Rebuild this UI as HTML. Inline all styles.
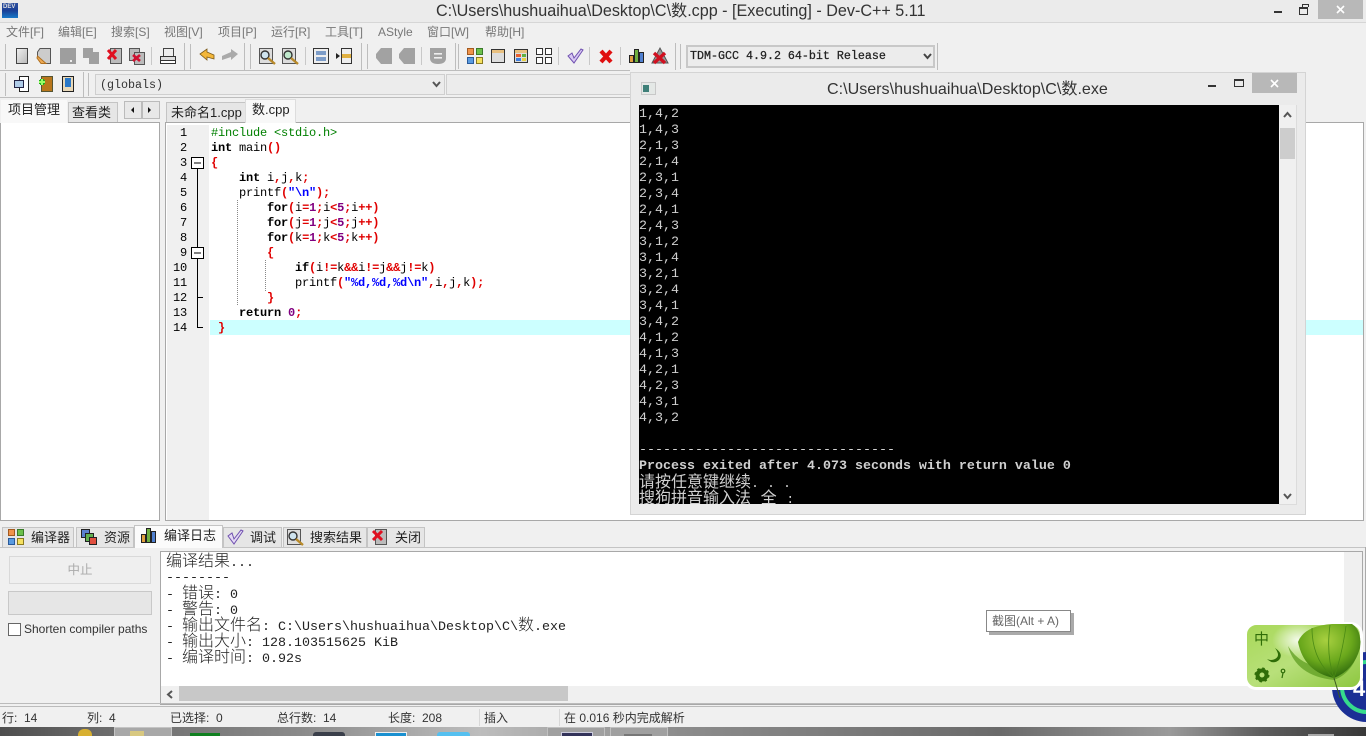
<!DOCTYPE html>
<html lang="zh"><head><meta charset="utf-8"><title>Dev-C++ 5.11</title>
<style>
html,body{margin:0;padding:0}
body{width:1366px;height:736px;overflow:hidden;position:relative;background:#f0f0f0;font-family:"Liberation Sans","Noto Sans CJK SC",sans-serif;font-size:12px;color:#222}
.a{position:absolute;box-sizing:border-box}
.t{position:absolute;white-space:pre;line-height:16px}
.m{color:#777;top:24px;font-size:12px}
.mono{font-family:"Liberation Mono","Noto Sans CJK SC",monospace}
.tab{position:absolute;box-sizing:border-box;background:#e6e6e6;border:1px solid #c4c4c4;border-bottom:0;font-size:13px;line-height:19px;white-space:pre;color:#222}
.on{background:#f8f8f8}
#code{position:absolute;left:211px;top:126px;font:12px/15px "Liberation Mono",monospace;letter-spacing:-.2px;white-space:pre;color:#000}
#code div{height:15px}
b{font-weight:bold}
.r{color:#e00000;font-weight:bold}.k{font-weight:bold}.n{color:#800080;font-weight:bold}.s{color:#0000ff;font-weight:bold}.g{color:#008000}
#nums{position:absolute;left:167px;top:126px;width:20px;text-align:right;font:12px/15px "Liberation Mono",monospace;letter-spacing:-.2px;color:#000}
#con{position:absolute;left:639px;top:105px;width:640px;height:399px;padding-top:2px;box-sizing:border-box;background:#000;color:#d0d0d0;overflow:hidden;font:13.33px/16px "Liberation Mono","Noto Sans CJK SC",monospace;white-space:pre}
#con div{height:16px}
#con .c{font-size:16px;font-weight:300;font-family:"Liberation Mono","WenQuanYi Zen Hei",monospace}
#log{position:absolute;left:166px;top:554px;font:13.33px/16px "Liberation Mono","Noto Sans CJK SC",monospace;white-space:pre;color:#222}
#log div{height:16px}
#log span{font-size:16px;font-weight:300}
.st{position:absolute;top:710px;line-height:16px;font-size:12px;color:#333;white-space:pre}
</style></head><body>

<!-- title bar -->
<div class="a" style="left:0;top:0;width:1366px;height:23px;background:#ebebeb;border-bottom:1px solid #d6d6d6"></div>
<div class="a" style="left:2px;top:3px;width:16px;height:15px;background:linear-gradient(#2d4f9e 0,#1a3f96 50%,#1778c8 100%)"></div>
<div class="t" style="left:3px;top:4px;font:bold 6px/7px 'Liberation Sans';color:#ddd">DEV</div>
<div class="t" style="left:436px;top:3px;font-size:16.15px;color:#333">C:\Users\hushuaihua\Desktop\C\数.cpp - [Executing] - Dev-C++ 5.11</div>
<div class="a" style="left:1274px;top:11px;width:8px;height:2px;background:#333"></div>
<div class="a" style="left:1299px;top:7px;width:9px;height:8px;border:1px solid #333;border-top-width:2px"></div>
<div class="a" style="left:1302px;top:4px;width:7px;height:3px;border:1px solid #333;border-bottom:0;border-left:1px solid #333"></div>
<div class="a" style="left:1318px;top:0;width:45px;height:19px;background:#b8b8b8"></div>
<svg class="a" style="left:1336px;top:5px" width="9" height="9"><path d="M1 1L8 8M8 1L1 8" stroke="#fff" stroke-width="1.6"/></svg>

<!-- menu -->
<div class="t m" style="left:6px">文件[F]</div>
<div class="t m" style="left:58px">编辑[E]</div>
<div class="t m" style="left:111px">搜索[S]</div>
<div class="t m" style="left:164px">视图[V]</div>
<div class="t m" style="left:218px">项目[P]</div>
<div class="t m" style="left:271px">运行[R]</div>
<div class="t m" style="left:325px">工具[T]</div>
<div class="t m" style="left:378px">AStyle</div>
<div class="t m" style="left:427px">窗口[W]</div>
<div class="t m" style="left:485px">帮助[H]</div>

<!-- toolbar lines and icons -->
<svg class="a" style="left:0;top:40px" width="1000" height="62" viewBox="0 40 1000 62">
 <defs><linearGradient id="pg" x1="0" y1="0" x2="1" y2="1"><stop offset="0" stop-color="#f0f0f0"/><stop offset="1" stop-color="#b8b8b8"/></linearGradient></defs>
 <g fill="none" stroke="#bdbdbd">
  <path d="M0 70.5H630M0 97.5H630M5.5 44V69M184.5 43V70M190.5 44V69M244.5 43V70M250.5 44V69M361.5 43V70M367.5 44V69M455.5 43V70M458.5 44V69M675.5 43V70M680.5 44V69M937.5 43V70M5.5 73V96M83.5 72V97M88.5 73V96"/>
  <path d="M151.5 47V65M305.5 47V65M421.5 47V65M558.5 47V65M589.5 47V65M620.5 47V65" stroke="#c8c8c8"/>
 </g>
 <!-- new -->
 <rect x="16.5" y="48.5" width="11" height="15" fill="url(#pg)" stroke="#444"/>
 <!-- open -->
 <path d="M40 48.5H50.5V63.5H42L37.5 57V52Z" fill="#ccc" stroke="#555"/><path d="M37.5 56L46 63.5H41L37 58Z" fill="#eeaa55" stroke="#b07020"/>
 <!-- save gray -->
 <rect x="60" y="48" width="16" height="16" fill="#9e9e9e"/><rect x="70" y="60" width="2" height="2" fill="#eee"/>
 <path d="M83 48H93V52H99V64H89V58H83Z" fill="#a0a0a0"/>
 <!-- close -->
 <rect x="110.5" y="48.5" width="11" height="15" fill="#bbb" stroke="#555"/><path d="M108 50L116 59M116 50L108 59" stroke="#e01020" stroke-width="3"/>
 <rect x="129.5" y="48.5" width="10" height="12" fill="#bbb" stroke="#555"/><rect x="134.5" y="52.5" width="10" height="12" fill="#bbb" stroke="#555"/><path d="M133 55L140 61M140 55L133 61" stroke="#d01030" stroke-width="2.6"/>
 <!-- print -->
 <rect x="163.5" y="48.5" width="10" height="8" fill="#eee" stroke="#444"/><rect x="160.5" y="56.5" width="15" height="4" fill="#ddd" stroke="#333"/><rect x="160.5" y="60.5" width="15" height="3" fill="#fff" stroke="#333"/>
 <!-- undo/redo -->
 <path d="M200 54L207 49V52L214 55V59L207 57V60Z" fill="#f3b73a" stroke="#7c5a1a" stroke-width=".8"/>
 <path d="M238 54L231 49V52L222 56V60L231 57V60Z" fill="#aaa"/>
 <!-- find -->
 <rect x="259.5" y="48.5" width="13" height="15" fill="#ddd" stroke="#555"/><circle cx="265" cy="55" r="4" fill="#cfe3ee" stroke="#333" stroke-width="1.4"/><path d="M268 58L275 64" stroke="#b88a2a" stroke-width="2.4"/>
 <rect x="282.5" y="48.5" width="13" height="15" fill="#ddd" stroke="#555"/><circle cx="288" cy="55" r="4" fill="#bfe8cc" stroke="#333" stroke-width="1.4"/><path d="M291 58L298 64" stroke="#b88a2a" stroke-width="2.4"/>
 <!-- boxes -->
 <rect x="313.5" y="48.5" width="15" height="15" fill="#eee" stroke="#333"/><rect x="316" y="51" width="10" height="4" fill="#7c9cc8"/><rect x="316" y="57" width="10" height="4" fill="#7c9cc8"/>
 <path d="M341.5 48.5H351.5V63.5H341.5Z" fill="#eee" stroke="#333"/><rect x="342" y="54" width="9" height="4" fill="#e0b040"/><path d="M336 53L340 56L336 59Z" fill="#222"/>
 <!-- gray -->
 <path d="M381 48H392V64H381L376 58V54Z" fill="#a2a2a2"/><path d="M404 48H415V64H404L399 58V54Z" fill="#a2a2a2"/>
 <path d="M430 48H446V58Q446 64 438 64Q430 64 430 58Z" fill="#a2a2a2"/><rect x="434" y="53" width="8" height="1.6" fill="#eee"/><rect x="434" y="57" width="8" height="1.6" fill="#eee"/>
 <!-- colour grids -->
 <rect x="467.5" y="48.5" width="6" height="6" fill="#f0934a" stroke="#a35a20"/><rect x="476.5" y="48.5" width="6" height="6" fill="#6cc04a" stroke="#3a7a2a"/><rect x="467.5" y="57.5" width="6" height="6" fill="#5a9be0" stroke="#2a5a9a"/><rect x="476.5" y="57.5" width="6" height="6" fill="#f5e060" stroke="#8a7a20"/>
 <rect x="491.5" y="49.5" width="13" height="13" fill="#ddd" stroke="#333"/><rect x="492" y="50" width="12" height="3" fill="#e8c080"/>
 <rect x="514.5" y="49.5" width="13" height="13" fill="#ddd" stroke="#333"/><rect x="515" y="50" width="12" height="3" fill="#e8c080"/><rect x="516" y="54" width="5" height="3" fill="#e86030"/><rect x="522" y="54" width="4" height="3" fill="#60b040"/><rect x="516" y="58" width="5" height="3" fill="#4080e0"/><rect x="522" y="58" width="4" height="3" fill="#e8d040"/>
 <rect x="536.5" y="48.5" width="6" height="6" fill="#fff" stroke="#333"/><rect x="545.5" y="48.5" width="6" height="6" fill="#fff" stroke="#333"/><rect x="536.5" y="57.5" width="6" height="6" fill="#fff" stroke="#333"/><rect x="545.5" y="57.5" width="6" height="6" fill="#fff" stroke="#333"/>
 <!-- check -->
 <path d="M568 56L572 53L574 58L581 49L583 50L574 63Z" fill="#d8c8f4" stroke="#7050b0"/>
 <!-- x -->
 <path d="M601 51L611 62M611 51L601 62" stroke="#e01010" stroke-width="4.2"/>
 <!-- chart -->
 <rect x="629.5" y="55.5" width="4" height="7" fill="#e0a040" stroke="#222"/><rect x="634.5" y="49.5" width="4" height="13" fill="#70b040" stroke="#222"/><rect x="639.5" y="52.5" width="4" height="10" fill="#5080d0" stroke="#222"/>
 <path d="M652 63L660 48L668 63Z" fill="#999" stroke="#555"/><path d="M654 53L665 63M665 53L654 63" stroke="#d01020" stroke-width="3.4"/>
 <!-- toolbar 2 -->
 <rect x="19.5" y="76.5" width="9" height="15" fill="#fff" stroke="#222"/><rect x="14.5" y="80.5" width="9" height="7" fill="#b0cce8" stroke="#224"/>
 <rect x="41.5" y="76.5" width="11" height="15" fill="#b8761c" stroke="#553"/><path d="M42 80V84M40 82H44" stroke="#2a2" stroke-width="6"/><path d="M42 79V85M39 82H45" stroke="#9f6" stroke-width="2"/>
 <rect x="62.5" y="76.5" width="11" height="15" fill="#e8d8b8" stroke="#222"/><rect x="65" y="78" width="6" height="9" fill="#2a78c8"/>
</svg>

<!-- compiler combo -->
<div class="a" style="left:686px;top:45px;width:249px;height:23px;background:#ececec;border:2px solid #c8c8c8"></div>
<div class="t mono" style="left:690px;top:48px;font-size:11.67px;color:#222;-webkit-text-stroke:.25px #222">TDM-GCC 4.9.2 64-bit Release</div>
<svg class="a" style="left:923px;top:53px" width="9" height="7"><path d="M1 1L4.500 5L8 1" fill="none" stroke="#444" stroke-width="2"/></svg>

<!-- globals combo -->
<div class="a" style="left:95px;top:74px;width:350px;height:21px;background:#ececec;border:1px solid #cfcfcf"></div>
<div class="a" style="left:446px;top:74px;width:190px;height:21px;background:#ececec;border:1px solid #cfcfcf"></div>
<div class="t mono" style="left:100px;top:77px;font-size:11.67px;color:#333">(globals)</div>
<svg class="a" style="left:432px;top:81px" width="9" height="7"><path d="M1 1L4.500 5L8 1" fill="none" stroke="#555" stroke-width="2"/></svg>

<!-- left pane -->
<div class="a" style="left:0;top:122px;width:160px;height:399px;background:#fff;border:1px solid #a8a8a8"></div>
<div class="tab on" style="left:0;top:99px;width:68px;height:24px;border-color:#f0f0f0;padding-left:7px;background:#f8f8f8">项目管理</div>
<div class="tab" style="left:68px;top:102px;width:50px;height:20px;padding-left:3px;line-height:20px">查看类</div>
<div class="a" style="left:124px;top:101px;width:18px;height:18px;background:#e8e8e8;border:1px solid #bbb"></div>
<div class="a" style="left:142px;top:101px;width:18px;height:18px;background:#e8e8e8;border:1px solid #bbb"></div>
<svg class="a" style="left:130px;top:106px" width="26" height="8"><path d="M4 1V7L1 4ZM18 1V7L21 4Z" fill="#111"/></svg>

<!-- editor -->
<div class="a" style="left:165px;top:122px;width:1199px;height:399px;background:#fff;border:1px solid #a8a8a8"></div>
<div class="a" style="left:167px;top:125px;width:42px;height:395px;background:#f0f0f0"></div>
<div class="tab" style="left:166px;top:102px;width:80px;height:20px;padding-left:4px;line-height:20px">未命名1.cpp</div>
<div class="tab on" style="left:245px;top:99px;width:51px;height:24px;padding-left:6px;border-color:#ddd;line-height:20px">数.cpp</div>
<div class="a" style="left:210px;top:320px;width:1153px;height:15px;background:#ccffff"></div>

<div id="nums"><div>1</div><div>2</div><div>3</div><div>4</div><div>5</div><div>6</div><div>7</div><div>8</div><div>9</div><div>10</div><div>11</div><div>12</div><div>13</div><div>14</div></div>
<svg class="a" style="left:185px;top:150px" width="90" height="185" viewBox="185 150 90 185">
 <path d="M197.500 168V247M197.500 258V327.500H203M197.500 297.500H203" fill="none" stroke="#000"/>
 <rect x="191.500" y="157.500" width="12" height="11" fill="#fff" stroke="#000"/><path d="M194 163H201" stroke="#000"/>
 <rect x="191.500" y="247.500" width="12" height="11" fill="#fff" stroke="#000"/><path d="M194 253H201" stroke="#000"/>
 <path d="M237.500 200V306M265.500 260V291" stroke="#888" stroke-dasharray="1 1"/>
</svg>
<div id="code"><div><span class="g">#include &lt;stdio.h&gt;</span></div><div><span class="k">int</span> main<span class="r">()</span></div><div><span class="r">{</span></div><div>    <span class="k">int</span> i<span class="r">,</span>j<span class="r">,</span>k<span class="r">;</span></div><div>    printf<span class="r">(</span><span class="s">"\n"</span><span class="r">);</span></div><div>        <span class="k">for</span><span class="r">(</span>i<span class="r">=</span><span class="n">1</span><span class="r">;</span>i<span class="r">&lt;</span><span class="n">5</span><span class="r">;</span>i<span class="r">++)</span></div><div>        <span class="k">for</span><span class="r">(</span>j<span class="r">=</span><span class="n">1</span><span class="r">;</span>j<span class="r">&lt;</span><span class="n">5</span><span class="r">;</span>j<span class="r">++)</span></div><div>        <span class="k">for</span><span class="r">(</span>k<span class="r">=</span><span class="n">1</span><span class="r">;</span>k<span class="r">&lt;</span><span class="n">5</span><span class="r">;</span>k<span class="r">++)</span></div><div>        <span class="r">{</span></div><div>            <span class="k">if</span><span class="r">(</span>i<span class="r">!=</span>k<span class="r">&amp;&amp;</span>i<span class="r">!=</span>j<span class="r">&amp;&amp;</span>j<span class="r">!=</span>k<span class="r">)</span></div><div>            printf<span class="r">(</span><span class="s">"%d,%d,%d\n"</span><span class="r">,</span>i<span class="r">,</span>j<span class="r">,</span>k<span class="r">);</span></div><div>        <span class="r">}</span></div><div>    <span class="k">return</span> <span class="n">0</span><span class="r">;</span></div><div> <span class="r">}</span></div></div>

<!-- console window -->
<div class="a" style="left:630px;top:72px;width:676px;height:443px;background:#ebebeb;border:1px solid #d4d4d4"></div>
<div class="a" style="left:641px;top:82px;width:15px;height:13px;background:#e4e8e6;border:1px solid #c8c8c8"></div>
<div class="a" style="left:643px;top:85px;width:6px;height:7px;background:#3e7f78"></div>
<div class="t" style="left:827px;top:81px;font-size:16.1px;color:#333">C:\Users\hushuaihua\Desktop\C\数.exe</div>
<div class="a" style="left:1208px;top:85px;width:8px;height:2px;background:#333"></div>
<div class="a" style="left:1234px;top:79px;width:10px;height:8px;border:1px solid #333;border-top-width:2px"></div>
<div class="a" style="left:1252px;top:73px;width:45px;height:20px;background:#b8b8b8"></div>
<svg class="a" style="left:1270px;top:79px" width="9" height="9"><path d="M1 1L8 8M8 1L1 8" stroke="#fff" stroke-width="1.6"/></svg>
<div class="a" style="left:1279px;top:105px;width:18px;height:400px;background:#f0f0f0;border-right:1px solid #dcdcdc;border-bottom:1px solid #dcdcdc"></div>
<div class="a" style="left:1280px;top:128px;width:15px;height:31px;background:#cdcdcd"></div>
<svg class="a" style="left:1283px;top:111px" width="9" height="7"><path d="M1 6L4.500 2L8 6" fill="none" stroke="#555" stroke-width="2"/></svg>
<svg class="a" style="left:1283px;top:493px" width="9" height="7"><path d="M1 1L4.500 5L8 1" fill="none" stroke="#555" stroke-width="2"/></svg>
<div id="con"><div>1,4,2</div><div>1,4,3</div><div>2,1,3</div><div>2,1,4</div><div>2,3,1</div><div>2,3,4</div><div>2,4,1</div><div>2,4,3</div><div>3,1,2</div><div>3,1,4</div><div>3,2,1</div><div>3,2,4</div><div>3,4,1</div><div>3,4,2</div><div>4,1,2</div><div>4,1,3</div><div>4,2,1</div><div>4,2,3</div><div>4,3,1</div><div>4,3,2</div><div> </div><div>--------------------------------</div><div><b>Process exited after 4.073 seconds with return value 0</b></div><div><span class="c">请按任意键继续</span>. . .</div><div><span class="c">搜狗拼音输入法 全 </span>:</div></div>

<!-- bottom tabs -->
<div class="tab" style="left:2px;top:527px;width:72px;height:20px;padding-left:28px;line-height:20px">编译器</div>
<div class="tab" style="left:76px;top:527px;width:58px;height:20px;padding-left:27px;line-height:20px">资源</div>
<div class="tab" style="left:223px;top:527px;width:59px;height:20px;padding-left:26px;line-height:20px">调试</div>
<div class="tab" style="left:283px;top:527px;width:84px;height:20px;padding-left:26px;line-height:20px">搜索结果</div>
<div class="tab" style="left:367px;top:527px;width:58px;height:20px;padding-left:27px;line-height:20px">关闭</div>
<div class="a" style="left:0;top:547px;width:1366px;height:1px;background:#c4c4c4"></div>
<div class="a" style="left:1365px;top:547px;width:1px;height:160px;background:#aaa"></div>
<div class="tab" style="left:134px;top:525px;width:89px;height:23px;padding-left:29px;background:#fbfbfb;line-height:19px">编译日志</div>
<svg class="a" style="left:0;top:524px" width="430" height="24" viewBox="0 524 430 24">
 <rect x="8.500" y="529.500" width="6" height="6" fill="#f0934a" stroke="#a35a20"/><rect x="17.500" y="529.500" width="6" height="6" fill="#6cc04a" stroke="#3a7a2a"/><rect x="8.500" y="538.500" width="6" height="6" fill="#5a9be0" stroke="#2a5a9a"/><rect x="17.500" y="538.500" width="6" height="6" fill="#f5e060" stroke="#8a7a20"/>
 <rect x="81.500" y="529.500" width="8" height="8" fill="#5a80d0" stroke="#222"/><rect x="85.500" y="533.500" width="8" height="8" fill="#60b050" stroke="#222"/><rect x="89.500" y="537.500" width="7" height="7" fill="#e05040" stroke="#222"/>
 <rect x="141.500" y="534.500" width="4" height="8" fill="#e0a040" stroke="#222"/><rect x="146.500" y="528.500" width="4" height="14" fill="#70b040" stroke="#222"/><rect x="151.500" y="531.500" width="4" height="11" fill="#5080d0" stroke="#222"/>
 <path d="M228 536L232 533L234 539L241 530L243 531L234 544Z" fill="#e4daf4" stroke="#7050b0"/>
 <rect x="287.500" y="529.500" width="13" height="15" fill="#ddd" stroke="#555"/><circle cx="293" cy="536" r="4" fill="#cfe3ee" stroke="#333" stroke-width="1.400"/><path d="M296 539L303 545" stroke="#b88a2a" stroke-width="2.400"/>
 <rect x="375.500" y="529.500" width="11" height="15" fill="#bbb" stroke="#555"/><path d="M373 531L382 540M382 531L373 540" stroke="#e01020" stroke-width="3"/>
</svg>

<!-- bottom left controls -->
<div class="a" style="left:9px;top:556px;width:142px;height:28px;background:#efefef;border:1px solid #d9d9d9;text-align:center;line-height:26px;color:#aaa;font-size:12.500px">中止</div>
<div class="a" style="left:8px;top:591px;width:144px;height:24px;background:#e6e6e6;border:1px solid #c8c8c8"></div>
<div class="a" style="left:8px;top:623px;width:13px;height:13px;background:#fff;border:1px solid #666"></div>
<div class="t" style="left:24px;top:621px;font-size:12px;color:#333">Shorten compiler paths</div>

<!-- log -->
<div class="a" style="left:160px;top:551px;width:1203px;height:154px;background:#fff;border:1px solid #a8a8a8"></div>
<div class="a" style="left:1344px;top:552px;width:18px;height:152px;background:#f0f0f0"></div>
<div class="a" style="left:161px;top:686px;width:1183px;height:18px;background:#f0f0f0"></div>
<div class="a" style="left:179px;top:686px;width:389px;height:15px;background:#c8c8c8"></div>
<svg class="a" style="left:166px;top:690px" width="8" height="9"><path d="M6 1L2 4.500L6 8" fill="none" stroke="#555" stroke-width="2"/></svg>
<div id="log"><div><span>编译结果</span>...</div><div style="margin-top:1px">--------</div><div style="margin-top:-1px">- <span>错误</span>: 0</div><div>- <span>警告</span>: 0</div><div>- <span>输出文件名</span>: C:\Users\hushuaihua\Desktop\C\<span>数</span>.exe</div><div>- <span>输出大小</span>: 128.103515625 KiB</div><div>- <span>编译时间</span>: 0.92s</div></div>

<!-- tooltip -->
<div class="a" style="left:986px;top:610px;width:85px;height:22px;background:#fff;border:1px solid #888;box-shadow:3px 3px 0 #aaa;padding-left:5px;line-height:20px;color:#666;font-size:12px;white-space:pre">截图(Alt + A)</div>

<!-- status bar -->
<div class="a" style="left:0;top:703px;width:1366px;height:1px;background:#bbb"></div>
<div class="a" style="left:0;top:706px;width:1366px;height:1px;background:#bbb"></div>
<div class="a" style="left:0;top:707px;width:1366px;height:20px;background:#f0f0f0"></div>
<div class="st" style="left:2px">行:  14</div>
<div class="st" style="left:87px">列:  4</div>
<div class="st" style="left:170px">已选择:  0</div>
<div class="st" style="left:277px">总行数:  14</div>
<div class="st" style="left:388px">长度:  208</div>
<div class="st" style="left:484px">插入</div>
<div class="st" style="left:564px">在 0.016 秒内完成解析</div>
<div class="a" style="left:479px;top:709px;width:1px;height:17px;background:#d8d8d8"></div>
<div class="a" style="left:559px;top:709px;width:1px;height:17px;background:#d8d8d8"></div>

<!-- taskbar -->
<div class="a" style="left:0;top:727px;width:1366px;height:9px;background:linear-gradient(90deg,#4e4e4e 0,#6a6a6a 100px,#8a8a8a 300px,#bdbdbd 480px,#8c8c8c 680px,#7a7a7a 850px,#6a6a6a 1000px,#9a9a9a 1170px,#5e5e5e 1260px,#383838 1366px)"></div>
<div class="a" style="left:114px;top:727px;width:58px;height:9px;background:#a8a8a8;border:1px solid #c4c4c4;border-bottom:0"></div>
<div class="a" style="left:130px;top:731px;width:14px;height:5px;background:#d8c880"></div>
<div class="a" style="left:78px;top:729px;width:14px;height:7px;background:#d8b030;border-radius:6px 6px 0 0"></div>
<div class="a" style="left:190px;top:733px;width:30px;height:3px;background:#108020"></div>
<div class="a" style="left:313px;top:732px;width:32px;height:4px;background:#3a3f4a;border-radius:3px 3px 0 0"></div>
<div class="a" style="left:375px;top:732px;width:32px;height:4px;background:#1a90d0;border:1px solid #eee;border-bottom:0"></div>
<div class="a" style="left:437px;top:732px;width:33px;height:4px;background:#55c0f0;border-radius:3px 3px 0 0"></div>
<div class="a" style="left:547px;top:727px;width:58px;height:9px;background:#a0a0a0;border:1px solid #c0c0c0;border-bottom:0"></div>
<div class="a" style="left:561px;top:732px;width:32px;height:4px;background:#33335a;border:1px solid #ccd;border-bottom:0"></div>
<div class="a" style="left:610px;top:727px;width:58px;height:9px;background:#a0a0a0;border:1px solid #c0c0c0;border-bottom:0"></div>
<div class="a" style="left:624px;top:734px;width:28px;height:2px;background:#777"></div>
<div class="a" style="left:1308px;top:734px;width:26px;height:2px;background:#e8e8e8;opacity:.6"></div>

<!-- floating circle + IME -->
<svg class="a" style="left:1240px;top:618px" width="126" height="108" viewBox="1240 618 126 108">
 <defs>
  <linearGradient id="gb" x1="0" y1="0" x2="1" y2="1"><stop offset="0" stop-color="#a8d858"/><stop offset=".5" stop-color="#b8e07a"/><stop offset="1" stop-color="#8cc63e"/></linearGradient>
  <radialGradient id="lf" cx=".45" cy=".3" r=".75"><stop offset="0" stop-color="#a8d040"/><stop offset=".55" stop-color="#6aa81c"/><stop offset="1" stop-color="#25600a"/></radialGradient>
  <radialGradient id="gl" cx=".5" cy=".5" r=".5"><stop offset="0" stop-color="#fff" stop-opacity=".85"/><stop offset="1" stop-color="#fff" stop-opacity="0"/></radialGradient>
 </defs>
 <circle cx="1367" cy="687" r="35" fill="#1b2f95"/>
 <circle cx="1367" cy="687" r="25" fill="none" stroke="#36db8c" stroke-width="4"/>
 <rect x="1245.500" y="623.500" width="116" height="65" rx="11" fill="url(#gb)" stroke="#fff" stroke-width="3"/>
 <ellipse cx="1298" cy="640" rx="26" ry="18" fill="url(#gl)"/>
 <path d="M1288 646Q1296 676 1334 680Q1356 672 1361 640Q1350 668 1326 668Q1300 666 1288 646Z" fill="#5f9e22" opacity=".75"/>
 <path d="M1298 642Q1304 626 1332 624H1352Q1362 630 1360 648Q1354 670 1334 678Q1304 672 1298 642Z" fill="url(#lf)"/>
 <path d="M1334 678Q1312 660 1312 628M1334 678Q1326 655 1330 625M1334 678Q1342 655 1346 626" fill="none" stroke="#4a8a14" stroke-width=".8"/>
 <path d="M1334 678L1340 698" stroke="#3a5a20"/>
 <circle cx="1262" cy="675" r="4.500" fill="none" stroke="#2f6d08" stroke-width="4"/>
 <circle cx="1262" cy="675" r="6.500" fill="none" stroke="#2f6d08" stroke-width="2" stroke-dasharray="2.500 2.600"/>
 <path d="M1275 648Q1281 656 1275 659Q1271 661 1267 659Q1273 665 1279 660Q1284 654 1275 648Z" fill="#2f6d08"/>
 <circle cx="1283" cy="671" r="1.800" fill="none" stroke="#2f6d08" stroke-width="1.200"/><path d="M1283 673L1282 678" stroke="#2f6d08" stroke-width="1.200"/>
</svg>
<div class="t" style="left:1254px;top:632px;font-size:15px;color:#2f6d08">中</div>
<div class="t" style="left:1353px;top:676px;font:bold 22px/26px 'Liberation Sans';color:#fff;width:13px;overflow:hidden">4</div>
</body></html>
